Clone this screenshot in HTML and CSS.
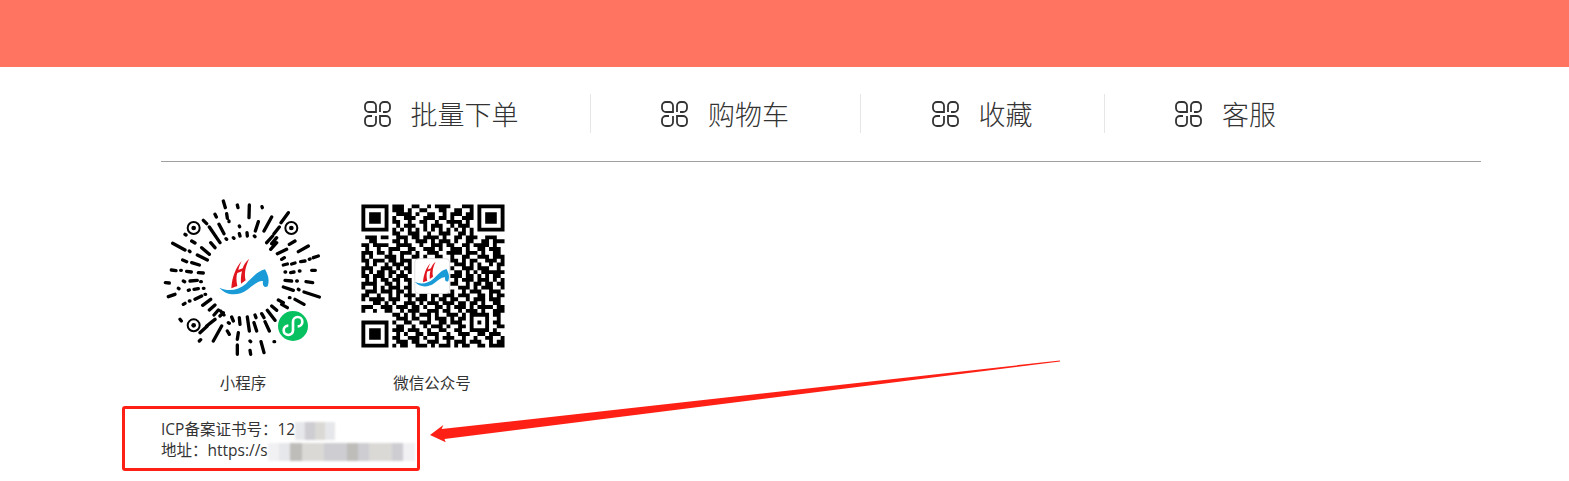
FILE: index.html
```html
<!DOCTYPE html>
<html lang="en">
<head>
    <meta charset="UTF-8">
    <meta name="viewport" content="width=device-width, initial-scale=1.0">
    <title>Footer</title>
    <link rel="stylesheet" href="styles.css">
</head>
<body>
    <svg class="sprites" width="0" height="0">
        <defs>
            <g id="grid-icon" fill="none" stroke="currentColor" stroke-width="1.8">
                <path d="M5 1h3a4 4 0 0 1 4 4v6H5a4 4 0 0 1-4-4V5a4 4 0 0 1 4-4z"></path>
                <path d="M16 11V5a4 4 0 0 1 4-4h2a4 4 0 0 1 4 4v2a4 4 0 0 1-4 4h-3"></path>
                <path d="M12 15v6a4 4 0 0 1-4 4H5a4 4 0 0 1-4-4v-2a4 4 0 0 1 4-4h3"></path>
                <path d="M16 15h6a4 4 0 0 1 4 4v2a4 4 0 0 1-4 4h-2a4 4 0 0 1-4-4z"></path>
            </g>
            <g id="brand">
                <path fill="#e2151f" d="M275 210C258 228 246 258 244 292L262 285C258 268 259 254 262 246L276 241C273 252 272 265 273 278L287 268C282 250 286 225 298 203C286 213 280 224 278 232L265 237C267 228 270 220 275 210z"></path>
                <path fill="#1a9bd8" d="M208 290C235 303 265 298 288 278C303 264 322 240 345 235C353 250 360 265 353 286C345 292 336 286 339 270C324 268 308 284 292 296C265 316 228 314 208 290z"></path>
            </g>
        </defs>
    </svg>

    <div class="banner"></div>

    <div class="wrap">
        <div class="nav">
            <a href="#" class="nav-item"><svg class="nav-icon" viewBox="0 0 27 26"><use href="#grid-icon"></use></svg>批量下单</a>
            <a href="#" class="nav-item"><svg class="nav-icon" viewBox="0 0 27 26"><use href="#grid-icon"></use></svg>购物车</a>
            <a href="#" class="nav-item"><svg class="nav-icon" viewBox="0 0 27 26"><use href="#grid-icon"></use></svg>收藏</a>
            <a href="#" class="nav-item"><svg class="nav-icon" viewBox="0 0 27 26"><use href="#grid-icon"></use></svg>客服</a>
        </div>

        <div class="codes">
            <div class="code">
                <svg class="code-img" viewBox="33 12 492 492">
                    <path fill="none" stroke="#000" stroke-width="10" stroke-linecap="round" d="M220 30L226 50M262 42L264 50M298 42L297 80M336 47L337 50M415 65L393 95M195 70L199 78M230 68L232 82M237 90L237 92M160 88L170 98M178 108L210 155M207 100L222 128M268 105L269 107M325 92L316 120M365 78L342 120M388 108L372 128M268 128L270 135M291 125L292 135M313 135L315 137M105 130L108 132M125 150L135 156M68 157L105 177M155 170L178 190M182 155L195 170M228 143L230 145M250 140L252 142M118 180L120 182M142 192L172 207M98 207L110 212M125 215L148 222M64 237L78 239M92 238L94 238M110 241L124 243M145 245L160 246M46 275L58 276M100 270L104 272M120 270L142 268M152 272L154 272M85 292L87 293M55 317L75 310M115 298L118 297M132 295L145 293M160 292L162 292M100 340L105 337M118 330L120 330M135 325L155 315M165 310L167 310M158 343L182 325M178 357L195 342M205 357L192 372M222 372L212 360M350 155L368 135M380 140L365 158M362 175L380 155M435 150L418 160M410 175L382 188M395 205L403 200M475 165L445 182M505 195L490 200M478 205L480 204M465 210L452 212M435 216L425 219M400 222L412 219M405 243L407 243M422 245L432 243M448 240L450 240M485 238L496 238M405 268L425 270M440 270L442 270M468 272L488 275M400 288L430 298M445 295L447 296M462 303L508 318M385 327L400 335M418 320L420 320M435 325L462 340M365 345L380 358M395 340L412 350M352 358L375 388M245 378L250 390M268 380L270 400M292 378L298 420M315 372L318 380M335 368L342 380M345 392L358 420M312 395L320 420M265 425L262 445M232 420L238 430M215 405L190 450M235 395L238 397M172 405L150 425M195 385L170 405M210 375L220 365M148 450L152 446M262 462L262 490M300 450L302 452M300 478L302 490M333 452L342 485M372 452L374 452M94 390L90 385"></path>
                    <g fill="none" stroke="#000" stroke-width="6">
                        <circle cx="131" cy="111" r="18"></circle>
                        <circle cx="424" cy="111" r="18"></circle>
                        <circle cx="131" cy="403" r="18"></circle>
                    </g>
                    <circle cx="131" cy="111" r="7"></circle>
                    <circle cx="424" cy="111" r="7"></circle>
                    <circle cx="131" cy="403" r="7"></circle>
                    <use href="#brand"></use>
                    <circle cx="429" cy="405" r="45" fill="#07c160"></circle>
                    <path fill="none" stroke="#fff" stroke-width="8" d="M415 404A14 14 0 1 0 429 418V392A14 14 0 1 1 443 406"></path>
                </svg>
                <div class="code-name">小程序</div>
            </div>
            <div class="code">
                <svg class="code-img" viewBox="-2.95 -2.45 42.4 42.4">
                    <path fill="none" stroke="#000" d="M0 .5h7M8 .5h3M13 .5h2M17 .5h1M19 .5h4M26 .5h3M30 .5h7
                        M0 1.5h1M6 1.5h1M8 1.5h3M12 1.5h1M15 1.5h2M20 1.5h2M24 1.5h2M28 1.5h1M30 1.5h1M36 1.5h1
                        M0 2.5h1M2 2.5h3M6 2.5h1M9 2.5h4M14 2.5h1M17 2.5h2M21 2.5h1M23 2.5h3M27 2.5h2M30 2.5h1M32 2.5h3M36 2.5h1
                        M0 3.5h1M2 3.5h3M6 3.5h1M8 3.5h1M11 3.5h3M16 3.5h3M20 3.5h2M23 3.5h1M26 3.5h3M30 3.5h1M32 3.5h3M36 3.5h1
                        M0 4.5h1M2 4.5h3M6 4.5h1M8 4.5h2M12 4.5h1M15 4.5h2M19 4.5h1M22 4.5h4M27 4.5h1M30 4.5h1M32 4.5h3M36 4.5h1
                        M0 5.5h1M6 5.5h1M9 5.5h1M11 5.5h3M16 5.5h1M18 5.5h3M23 5.5h1M25 5.5h3M30 5.5h1M36 5.5h1
                        M0 6.5h7M8 6.5h1M10 6.5h1M12 6.5h1M14 6.5h1M16 6.5h1M18 6.5h1M20 6.5h1M22 6.5h1M24 6.5h1M26 6.5h1M28 6.5h1M30 6.5h7
                        M8 7.5h2M12 7.5h3M17 7.5h1M20 7.5h3M25 7.5h2M28 7.5h1
                        M1 8.5h3M5 8.5h2M9 8.5h3M13 8.5h2M16 8.5h4M21 8.5h1M24 8.5h2M27 8.5h3M32 8.5h3
                        M2 9.5h2M8 9.5h2M11 9.5h1M14 9.5h3M18 9.5h1M20 9.5h3M24 9.5h1M27 9.5h2M31 9.5h2M34 9.5h3
                        M0 10.5h2M3 10.5h4M9 10.5h4M15 10.5h1M18 10.5h3M22 10.5h2M26 10.5h2M29 10.5h4M34 10.5h1
                        M1 11.5h1M4 11.5h1M7 11.5h3M12 11.5h2M16 11.5h3M20 11.5h1M23 11.5h3M27 11.5h1M30 11.5h2M33 11.5h3
                        M0 12.5h3M4 12.5h2M7 12.5h1M10 12.5h3M14 12.5h1M17 12.5h3M22 12.5h4M27 12.5h3M31 12.5h1M34 12.5h2
                        M0 13.5h1M2 13.5h1M6 13.5h3M10 13.5h1M13 13.5h2M16 13.5h1M19 13.5h2M23 13.5h1M26 13.5h2M30 13.5h3M34 13.5h3
                        M0 14.5h2M3 14.5h3M7 14.5h2M10 14.5h3M23 14.5h2M26 14.5h1M28 14.5h2M32 14.5h3M36 14.5h1
                        M1 15.5h1M3 15.5h1M6 15.5h1M8 15.5h3M12 15.5h1M24 15.5h3M28 15.5h1M30 15.5h1M33 15.5h1M35 15.5h2
                        M0 16.5h3M5 16.5h3M9 16.5h1M11 16.5h2M23 16.5h1M26 16.5h3M30 16.5h3M35 16.5h1
                        M0 17.5h1M2 17.5h1M4 17.5h2M7 17.5h2M10 17.5h1M12 17.5h1M24 17.5h2M27 17.5h1M29 17.5h1M31 17.5h3M34 17.5h3
                        M0 18.5h2M3 18.5h3M7 18.5h1M9 18.5h3M23 18.5h3M27 18.5h2M30 18.5h1M32 18.5h1M34 18.5h2
                        M1 19.5h1M3 19.5h1M5 19.5h2M8 19.5h2M11 19.5h2M24 19.5h1M26 19.5h3M30 19.5h3M34 19.5h1M36 19.5h1
                        M0 20.5h4M6 20.5h2M9 20.5h1M12 20.5h1M23 20.5h2M27 20.5h1M29 20.5h2M32 20.5h2M35 20.5h2
                        M0 21.5h1M3 21.5h1M5 21.5h1M7 21.5h3M11 21.5h2M25 21.5h3M29 21.5h1M31 21.5h3M36 21.5h1
                        M1 22.5h3M5 22.5h3M9 22.5h2M12 22.5h1M23 22.5h1M26 22.5h1M28 22.5h3M33 22.5h3
                        M0 23.5h2M4 23.5h1M7 23.5h1M9 23.5h1M11 23.5h3M15 23.5h2M18 23.5h2M21 23.5h3M25 23.5h3M30 23.5h2M33 23.5h1M35 23.5h2
                        M0 24.5h1M2 24.5h4M7 24.5h3M12 24.5h1M14 24.5h3M18 24.5h1M20 24.5h2M23 24.5h2M27 24.5h1M29 24.5h3M33 24.5h3
                        M3 25.5h2M6 25.5h1M8 25.5h1M11 25.5h3M15 25.5h1M17 25.5h3M21 25.5h3M25 25.5h2M28 25.5h2M31 25.5h1M34 25.5h2
                        M0 26.5h3M5 26.5h3M9 26.5h3M13 26.5h2M16 26.5h1M19 26.5h2M22 26.5h1M24 26.5h3M28 26.5h1M30 26.5h3M33 26.5h1M35 26.5h2
                        M0 27.5h1M3 27.5h1M6 27.5h2M10 27.5h1M12 27.5h3M17 27.5h3M21 27.5h2M25 27.5h1M27 27.5h3M31 27.5h1M34 27.5h3
                        M8 28.5h2M11 28.5h1M13 28.5h1M15 28.5h3M19 28.5h1M22 28.5h3M26 28.5h1M28 28.5h5M34 28.5h2
                        M9 29.5h3M13 29.5h2M17 29.5h1M19 29.5h3M23 29.5h1M25 29.5h2M28 29.5h1M32 29.5h1M35 29.5h1
                        M0 30.5h7M8 30.5h1M11 30.5h2M15 30.5h3M20 30.5h2M23 30.5h3M28 30.5h1M30 30.5h1M32 30.5h1M34 30.5h2
                        M0 31.5h1M6 31.5h1M9 31.5h2M13 31.5h1M16 31.5h1M18 31.5h3M22 31.5h1M25 31.5h2M28 31.5h1M32 31.5h1M35 31.5h2
                        M0 32.5h1M2 32.5h3M6 32.5h1M8 32.5h3M12 32.5h3M17 32.5h1M20 32.5h2M24 32.5h2M28 32.5h5M34 32.5h1
                        M0 33.5h1M2 33.5h3M6 33.5h1M9 33.5h1M11 33.5h1M14 33.5h2M17 33.5h3M22 33.5h1M25 33.5h3M30 33.5h2M33 33.5h3
                        M0 34.5h1M2 34.5h3M6 34.5h1M8 34.5h2M12 34.5h3M16 34.5h1M19 34.5h1M21 34.5h3M26 34.5h1M29 34.5h1M32 34.5h2M36 34.5h1
                        M0 35.5h1M6 35.5h1M9 35.5h3M13 35.5h2M17 35.5h3M22 35.5h1M24 35.5h3M28 35.5h3M33 35.5h1M35 35.5h2
                        M0 36.5h7M8 36.5h1M10 36.5h2M14 36.5h3M18 36.5h1M20 36.5h3M24 36.5h1M26 36.5h2M30 36.5h2M33 36.5h4"></path>
                    <rect x="13.8" y="14" width="9" height="9" rx="1" fill="#fff" stroke="#d8d8d8" stroke-width=".2"></rect>
                    <use href="#brand" transform="translate(1.3 2.6) scale(.06)"></use>
                </svg>
                <div class="code-name">微信公众号</div>
            </div>
        </div>

        <div class="record">
            <div>ICP备案证书号：12<span class="mosaic mosaic-short"><i class="g1"></i><i class="g3"></i><i class="g2"></i><i class="g1"></i></span></div>
            <div>地址：https://s<span class="mosaic"><i class="g0"></i><i class="g1"></i><i class="g4"></i><i class="g2"></i><i class="g2"></i><i class="g3"></i><i class="g3"></i><i class="g4"></i><i class="g3"></i><i class="g2"></i><i class="g2"></i><i class="g3"></i><i class="g0"></i></span></div>
        </div>
    </div>

    <!-- annotation drawn over the screenshot -->
    <div class="mark-box"></div>
    <svg class="mark-arrow" viewBox="425 355 640 92">
        <path fill="#ff2015" d="M430 435L443.3 425L441.7 429L1060 360.5V361.5L444.5 439L445.7 442.3z"></path>
    </svg>
</body>
</html>
```

FILE: styles.css
```css
* {
    margin: 0;
    padding: 0;
    box-sizing: border-box;
}

body {
    position: relative;
    background-color: #fff;
    color: #333;
    font-family: "Open Sans", "Noto Sans CJK SC", sans-serif;
    min-height: 481px;
    overflow: hidden;
}

.sprites {
    position: absolute;
}

.banner {
    height: 67px;
    background-color: #ff7461;
}

.wrap {
    width: 1320px;
    margin-left: 161px;
}

.nav {
    display: flex;
    justify-content: center;
    padding: 27px 2px 28px 0;
    border-bottom: 1px solid #a0a0a0;
}

.nav-item {
    display: flex;
    align-items: center;
    height: 39px;
    padding: 0 71px 0 70.5px;
    font-size: 27px;
    font-weight: 300;
    color: #333;
    text-decoration: none;
}

.nav-item + .nav-item {
    border-left: 1px solid #e6e6e6;
}

.nav-icon {
    width: 27px;
    height: 26px;
    margin-right: 20px;
}

.codes {
    display: flex;
    gap: 25px;
    margin-top: 33px;
}

.code {
    width: 164px;
}

.code-img {
    display: block;
    width: 164px;
    height: 164px;
}

.code-name {
    margin-top: 14px;
    font-size: 15.5px;
    line-height: 20px;
    text-align: center;
}

.record {
    margin-top: 26px;
    font-size: 15.5px;
    line-height: 21px;
}

.mosaic {
    display: inline-flex;
    height: 18px;
    vertical-align: middle;
    filter: blur(1px);
}

.mosaic i {
    width: 11.3px;
}

.mosaic-short i {
    width: 10px;
}

.g0 {
    background-color: #f1f1f4;
}

.g1 {
    background-color: #e6e7ea;
}

.g2 {
    background-color: #dbd9d6;
}

.g3 {
    background-color: #cdcdd2;
}

.g4 {
    background-color: #bebdba;
}

.mark-box {
    position: absolute;
    left: 122px;
    top: 406px;
    width: 298px;
    height: 65px;
    border: 3px solid #ff2015;
    border-radius: 3px;
}

.mark-arrow {
    position: absolute;
    left: 425px;
    top: 355px;
    width: 640px;
    height: 92px;
}
```
